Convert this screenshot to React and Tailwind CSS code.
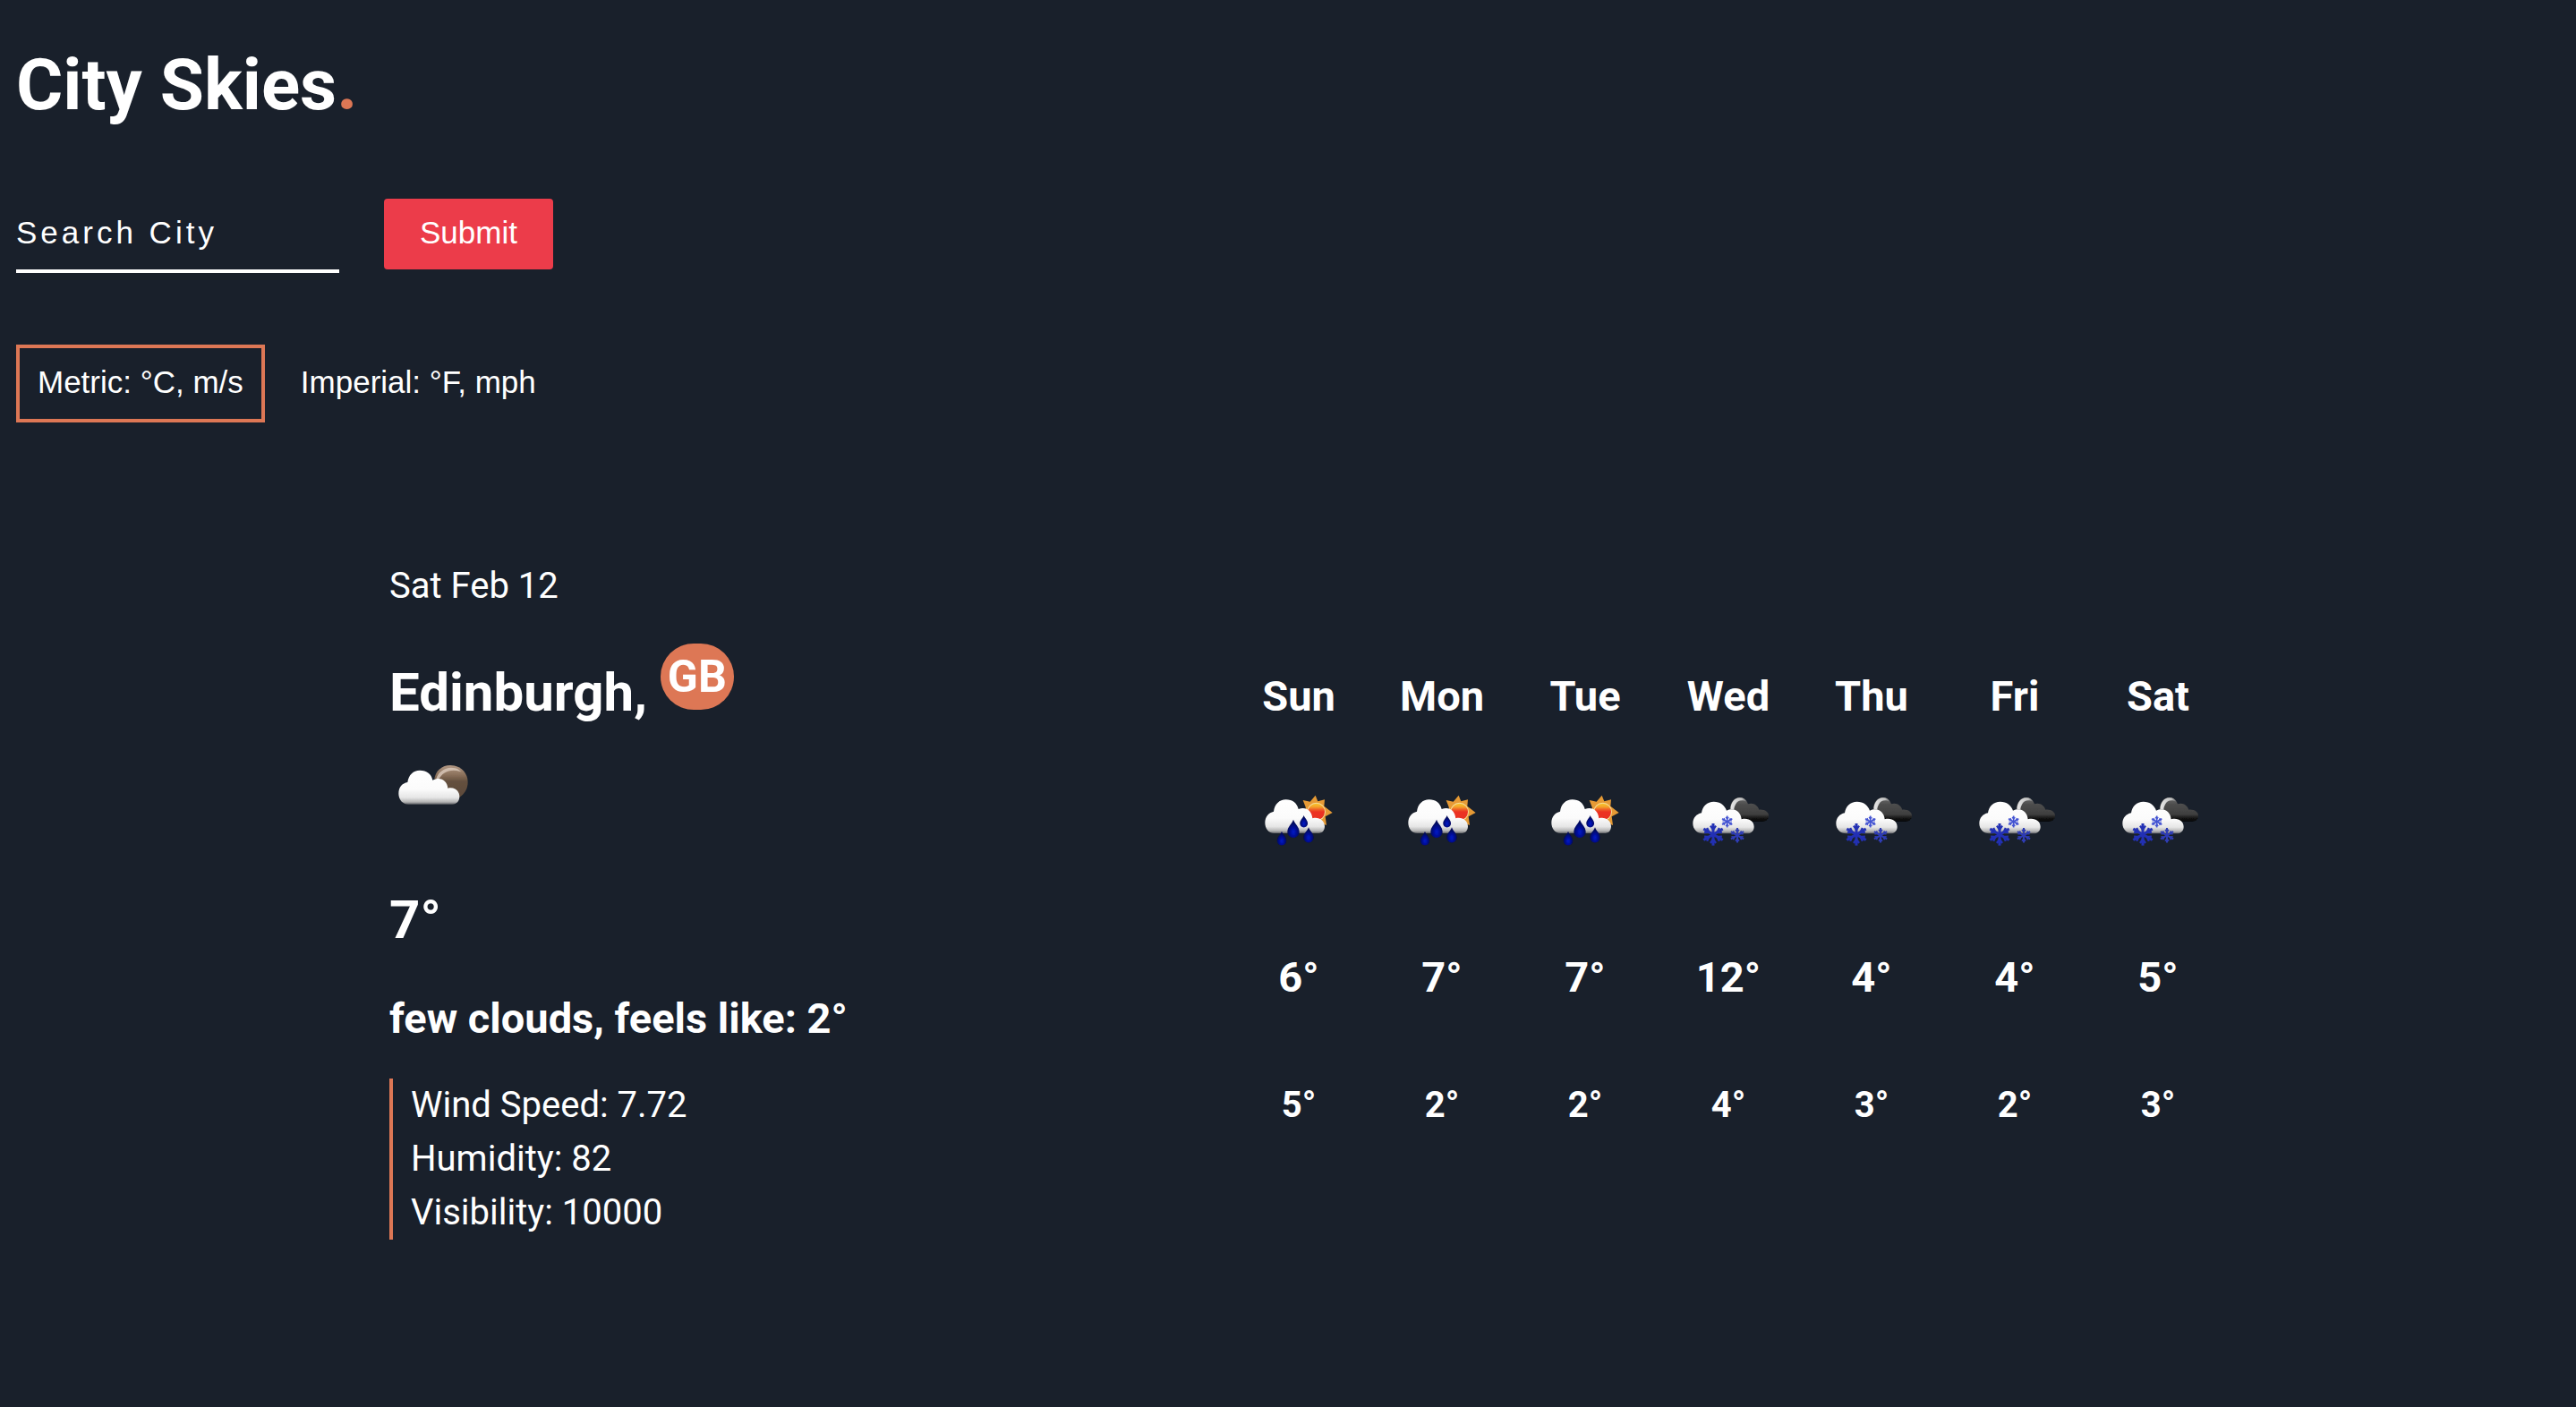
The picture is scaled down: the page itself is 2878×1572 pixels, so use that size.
import React, { useState } from "react";

const FORECAST = [
  { day: "Sun", icon: "rain", high: 6, low: 5 },
  { day: "Mon", icon: "rain", high: 7, low: 2 },
  { day: "Tue", icon: "rain", high: 7, low: 2 },
  { day: "Wed", icon: "snow", high: 12, low: 4 },
  { day: "Thu", icon: "snow", high: 4, low: 3 },
  { day: "Fri", icon: "snow", high: 4, low: 2 },
  { day: "Sat", icon: "snow", high: 5, low: 3 },
];

const UNITS = [
  { id: "metric", label: "Metric: °C, m/s" },
  { id: "imperial", label: "Imperial: °F, mph" },
];

/* Gradients and blur shared by all weather icons. */
function IconDefs() {
  return (
    <svg className="absolute size-0" aria-hidden="true">
      <defs>
        <linearGradient id="cloud" x1="0" y1="0" x2="0" y2="1">
          <stop offset="0" stopColor="#ffffff" />
          <stop offset="0.55" stopColor="#fbfbfb" />
          <stop offset="0.8" stopColor="#e6e6e6" />
          <stop offset="0.93" stopColor="#b4b4b4" />
          <stop offset="1" stopColor="#5f6166" />
        </linearGradient>
        <linearGradient id="darkCloud" x1="0" y1="0" x2="0" y2="1">
          <stop offset="0" stopColor="#6a6a6a" />
          <stop offset="0.3" stopColor="#4d4d4d" />
          <stop offset="0.7" stopColor="#3f3f3f" />
          <stop offset="0.88" stopColor="#121212" />
          <stop offset="1" stopColor="#050505" />
        </linearGradient>
        <linearGradient id="moon" x1="0" y1="0" x2="0" y2="1">
          <stop offset="0" stopColor="#b39a86" />
          <stop offset="0.3" stopColor="#8a705a" />
          <stop offset="0.5" stopColor="#64503f" />
          <stop offset="1" stopColor="#5d4a3a" />
        </linearGradient>
        <linearGradient id="sun" x1="0" y1="0" x2="0" y2="1">
          <stop offset="0" stopColor="#f6c52c" />
          <stop offset="0.2" stopColor="#f5a32b" />
          <stop offset="0.38" stopColor="#ee5a28" />
          <stop offset="0.5" stopColor="#ec3323" />
          <stop offset="1" stopColor="#e92e20" />
        </linearGradient>
        <radialGradient id="drop" cx="0.5" cy="0.68" r="0.5">
          <stop offset="0" stopColor="#0719c8" />
          <stop offset="0.5" stopColor="#030f98" />
          <stop offset="1" stopColor="#02075a" />
        </radialGradient>
        <linearGradient id="rim" x1="0" y1="0" x2="1" y2="0">
          <stop offset="0" stopColor="#e8e8e8" />
          <stop offset="0.7" stopColor="#c0c0c0" />
          <stop offset="1" stopColor="#c0c0c0" stopOpacity="0" />
        </linearGradient>
        <filter id="soft" x="-10%" y="-10%" width="120%" height="120%">
          <feGaussianBlur stdDeviation="1.9" />
        </filter>
      </defs>
    </svg>
  );
}

function FewCloudsIcon() {
  return (
    <svg viewBox="15 -36 300 300" className="size-[100px]" role="img" aria-label="few clouds">
      <g filter="url(#soft)">
        <path d="M166 92C171 67 191 48 219 48C252 48 278 72 278 104C278 126 267 144 249 156L200 140Z" fill="url(#moon)" />
        <path d="M172 92C180 70 199 57 222 56C238 56 248 62 256 70C236 62 214 64 199 74C190 80 184 88 181 95Z" fill="#dccbbd" opacity="0.8" />
        <path
          d="M79 179C59 179 46 162 46 143C46 122 58 108 76 105C79 81 95 65 117 65C141 65 156 77 160 98C186 85 209 99 211 125C232 119 250 134 250 152C250 168 240 179 225 179Z"
          fill="url(#cloud)"
        />
      </g>
    </svg>
  );
}

function Drop({ x, y, s }) {
  return (
    <path
      transform={`translate(${x} ${y}) scale(${s})`}
      d="M0 0C5 15 20 24 20 41C20 53 11 61 0 61C-11 61 -20 53 -20 41C-20 24 -5 15 0 0Z"
      fill="url(#drop)"
    />
  );
}

function RainIcon() {
  return (
    <svg viewBox="3 -6 300 300" className="size-[100px]" role="img" aria-label="rain">
      <g filter="url(#soft)">
        <path
          d="M209 59L217 79L240 73L238 95L266 117L242 130L246 159L224 150L180 130L176 98L167 75L191 80Z"
          fill="#e69a35"
        />
        <circle cx="212" cy="114" r="31" fill="#f6dd9a" />
        <circle cx="212" cy="114" r="28" fill="url(#sun)" />
        <path
          d="M70 186C52 186 40 170 40 151C40 131 52 117 69 113C72 89 88 73 110 73C132 73 147 85 152 105C176 95 197 109 199 136C220 130 240 143 240 163C240 176 232 186 220 186Z"
          fill="url(#cloud)"
        />
        <Drop x={135} y={140} s={1} />
        <Drop x={170} y={126} s={0.66} />
        <Drop x={96} y={179} s={0.78} />
        <Drop x={186} y={166} s={0.84} />
      </g>
    </svg>
  );
}

function Flake({ x, y, r, color }) {
  return (
    <g transform={`translate(${x} ${y}) scale(${r / 36})`} stroke={color} fill="none">
      {[0, 60, 120, 180, 240, 300].map((angle) => (
        <g key={angle} transform={`rotate(${angle})`}>
          <path d="M0 0V-37" strokeWidth="9" />
          <path d="M-9 -29L0 -16L9 -29" strokeWidth="7" />
        </g>
      ))}
    </g>
  );
}

function SnowIcon() {
  return (
    <svg viewBox="3 -6 300 300" className="size-[100px]" role="img" aria-label="snow">
      <g filter="url(#soft)">
        <path
          d="M158 106C160 82 172 66 191 66C205 66 214 74 219 88C235 82 251 91 256 107C274 105 288 114 288 127C288 139 280 146 268 146L200 146Z"
          fill="url(#darkCloud)"
        />
        <path d="M160 104C162 82 174 67 191 67C203 67 211 73 215 81C200 72 184 76 178 88C174 95 172 101 172 107Z" fill="url(#rim)" />
        <path
          d="M68 187C48 187 34 172 34 153C34 135 46 121 63 118C66 95 82 80 104 80C126 80 141 92 147 110C172 98 195 113 197 139C220 133 239 146 239 164C239 178 229 187 215 187Z"
          fill="url(#cloud)"
        />
        <Flake x={102} y={190} r={36} color="#2430b4" />
        <Flake x={149} y={147} r={19} color="#4353d2" />
        <Flake x={183} y={193} r={24} color="#2f3cb4" />
      </g>
    </svg>
  );
}

const ICONS = { rain: RainIcon, snow: SnowIcon };

function SearchForm() {
  const [city, setCity] = useState("");
  return (
    <form className="mt-[67px] flex items-end gap-[50px]" onSubmit={(e) => e.preventDefault()}>
      <input
        type="text"
        aria-label="Search City"
        placeholder="Search City"
        value={city}
        onChange={(e) => setCity(e.target.value)}
        className="h-[83px] w-[361px] border-b-4 border-white bg-transparent pb-1 font-[Liberation_Sans,Arial,sans-serif] text-[35px] tracking-[4px] text-white outline-none placeholder:text-white placeholder:opacity-100"
      />
      <button
        type="submit"
        className="mb-1 rounded-sm bg-[#ec3c4a] px-10 pt-[18px] pb-[22px] font-[Liberation_Sans,Arial,sans-serif] text-[35px] leading-[39px]"
      >
        Submit
      </button>
    </form>
  );
}

function UnitToggle() {
  const [unit, setUnit] = useState("metric");
  return (
    <div className="mt-20 flex gap-4">
      {UNITS.map(({ id, label }) => (
        <button
          key={id}
          type="button"
          aria-pressed={unit === id}
          onClick={() => setUnit(id)}
          className={`border-4 px-5 pt-[18px] pb-[22px] font-[Liberation_Sans,Arial,sans-serif] text-[35px] leading-[39px] ${
            unit === id ? "border-[#dd7755]" : "border-transparent"
          }`}
        >
          {label}
        </button>
      ))}
    </div>
  );
}

function CurrentWeather() {
  return (
    <section className="col-start-2">
      <p>Sat Feb 12</p>
      <h2 className="mt-11 text-[60px] leading-[90px] font-bold">
        Edinburgh,{" "}
        <span className="rounded-[40px] bg-[#dd7755] p-2 align-super text-[50px] leading-none">GB</span>
      </h2>
      <div className="mt-2">
        <FewCloudsIcon />
      </div>
      <h2 className="mt-14 text-[60px] leading-[90px] font-bold">7°</h2>
      <h3 className="mt-[30px] text-[47px] leading-[70px] font-bold">few clouds, feels like: 2°</h3>
      <ul className="mt-8 border-l-4 border-[#dd7755] pl-5">
        <li>Wind Speed: 7.72</li>
        <li>Humidity: 82</li>
        <li>Visibility: 10000</li>
      </ul>
    </section>
  );
}

function Forecast() {
  return (
    <section className="mt-[118px] flex">
      {FORECAST.map(({ day, icon, high, low }) => {
        const Icon = ICONS[icon];
        return (
          <div key={day} className="flex w-40 flex-col items-center font-bold">
            <h3 className="text-[47px] leading-[70px]">{day}</h3>
            <div className="mt-[54px]">
              <Icon />
            </div>
            <p className="mt-[90px] text-[47px] leading-[70px]">{high}°</p>
            <p className="mt-[78px]">{low}°</p>
          </div>
        );
      })}
    </section>
  );
}

export default function App() {
  return (
    <div className="min-h-screen bg-[#19202b] px-[18px] pt-[35px] pb-20 font-[Roboto,sans-serif] text-[40px] leading-[60px] text-white">
      <IconDefs />
      <header>
        <h1 className="text-[80px] leading-[120px] font-bold">
          City Skies<span className="text-[#dd7755]">.</span>
        </h1>
        <SearchForm />
        <UnitToggle />
      </header>
      <main className="mt-[153px] grid grid-cols-[417fr_936fr_1489fr]">
        <CurrentWeather />
        <Forecast />
      </main>
    </div>
  );
}
